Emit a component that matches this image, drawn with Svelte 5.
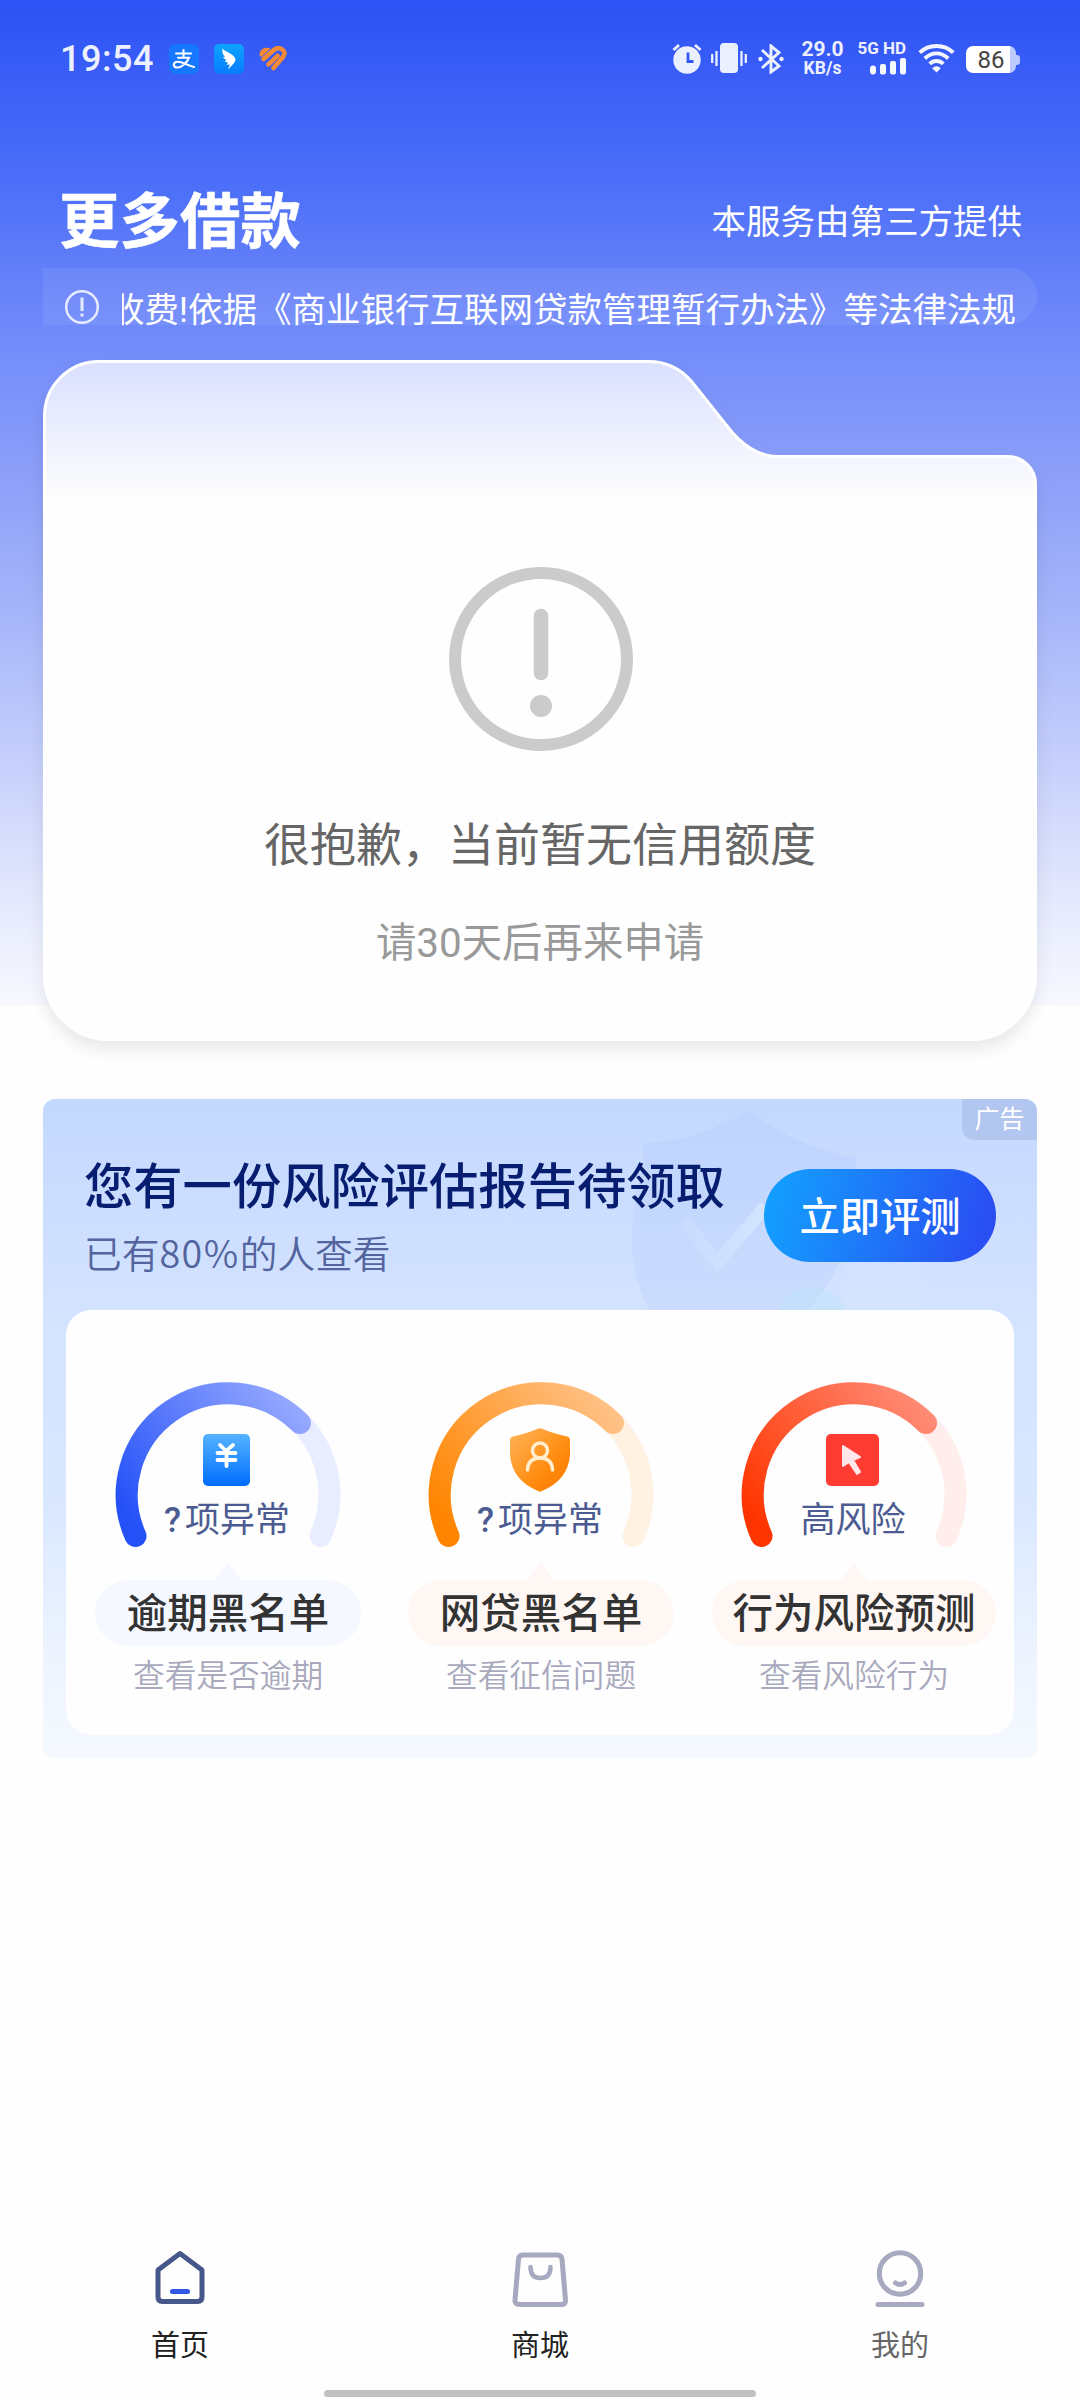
<script>
  const gauges = [
    { id: 'blue', from: '#2450f8', to: '#98abff', track: '#e8edff', pill: '#f5f8ff', pillWidth: 266, query: true, value: '项异常', title: '逾期黑名单', note: '查看是否逾期' },
    { id: 'orange', from: '#ff8500', to: '#ffc38a', track: '#fff2e3', pill: '#fff7f3', pillWidth: 266, query: true, value: '项异常', title: '网贷黑名单', note: '查看征信问题' },
    { id: 'red', from: '#ff3500', to: '#ff8d78', track: '#ffeeeb', pill: '#fff7f4', pillWidth: 284, query: false, value: '高风险', title: '行为风险预测', note: '查看风险行为' }
  ];
</script>

<div class="page">
  <header class="status">
    <div class="left">
      <span class="time">19:54</span>
      <svg class="app" viewBox="0 0 30 30">
        <rect width="30" height="30" rx="6" fill="#1677ff" />
        <g fill="none" stroke="#fff" stroke-width="2.1" stroke-linecap="round">
          <path d="M7 9.5H22M14.5 6V13.5M9 13.7H20C18.5 18 13 23.5 8.5 23.5C3 23.5 4 17.7 8.7 17.7C14 17.7 18 21.5 25 23" />
        </g>
      </svg>
      <svg class="app second" viewBox="0 0 30 30">
        <defs><linearGradient id="wing" x2="0" y2="1"><stop stop-color="#0da4ff" /><stop offset="1" stop-color="#087bff" /></linearGradient></defs>
        <rect width="30" height="30" rx="5" fill="url(#wing)" />
        <path d="M8.5 4.5C11 8 21 10 21.500 15.500C21.500 18 18 21.500 14 25.500L15.800 20.500L12.500 20.800L14 18.600L10.500 17.500L12.500 16.300L8.800 13.500L11 12.800C8.500 10.500 8 7.500 8.500 4.500Z" fill="#fff" />
      </svg>
      <svg class="heart" viewBox="0 0 28 26">
        <path d="M.5 9C.5 3 6 .3 11.500 2.500L3 10.500Q1 11.500 .5 9Z" fill="#f58a36" />
        <g fill="none" stroke="#f58a36" stroke-width="4.600" stroke-linecap="round">
          <path d="M4.600 13L14.500 4.200C20 -.5 28.500 4.500 24.300 10.500L14.500 22M9.500 18.300L18.500 9.800" />
        </g>
      </svg>
    </div>
    <div class="right">
      <svg class="alarm" viewBox="0 0 30 31">
        <circle cx="15" cy="17" r="13.700" fill="#eaf0ff" />
        <path d="M1.500 7L7 2M23 2L28.500 7" stroke="#eaf0ff" stroke-width="3" />
        <path d="M16 9.500V18.500H21.500" fill="none" stroke="#3157f5" stroke-width="2.800" />
      </svg>
      <svg class="vibrate" viewBox="0 0 36 31">
        <rect x="9" width="18" height="30" rx="4" fill="#eaf0ff" />
        <path d="M1.200 11V20M5.500 8V23M30.500 8V23M34.800 11V20" stroke="#eaf0ff" stroke-width="2.300" />
      </svg>
      <svg class="bt" viewBox="0 0 26 30">
        <path d="M4 6L21 22L13 28V2L21 8.500L4 24" fill="none" stroke="#eaf0ff" stroke-width="2.900" />
        <circle cx="2.500" cy="15" r="2.200" fill="#eaf0ff" /><circle cx="23.500" cy="15" r="2.200" fill="#eaf0ff" />
      </svg>
      <div class="speed"><span>29.0</span><span class="unit">KB/s</span></div>
      <div class="signal">
        <span>5G HD</span>
        <svg viewBox="0 0 36 17">
          <g fill="#f5f8ff"><rect y="7.500" width="6" height="9" rx="3" /><rect x="10" y="6" width="6" height="10.500" rx="2" /><rect x="20" y="3" width="6" height="13.500" rx="2" /><rect x="30" width="6" height="16.500" rx="2" /></g>
        </svg>
      </div>
      <svg class="wifi" viewBox="0 0 38 31">
        <g fill="none" stroke="#f2f5ff" stroke-width="4"><path d="M1.800 9.500C11 .300 27 .300 36.200 9.500M7 15.500C14 8.500 24 8.500 31 15.500M12 21C16 17 22 17 26 21" /></g>
        <path d="M14.500 25.500Q19 21.500 23.500 25.500L19 30Z" fill="#f2f5ff" />
      </svg>
      <div class="battery"><span>86</span></div>
    </div>
  </header>

  <div class="heading">
    <h1>更多借款</h1>
    <span>本服务由第三方提供</span>
  </div>

  <div class="notice">
    <svg viewBox="0 0 36 36"><g stroke="#e6ebff" fill="none" stroke-width="2.500"><circle cx="18" cy="18" r="15.800" /><path d="M18 8.500V22M18 24.500V27.500" stroke-width="3" /></g></svg>
    <div class="marquee"><span>收费!依据《商业银行互联网贷款管理暂行办法》等法律法规</span></div>
  </div>

  <section class="folder">
    <svg class="shape" viewBox="0 0 1080 720">
      <defs>
        <linearGradient id="paper" gradientUnits="userSpaceOnUse" x1="0" y1="22" x2="0" y2="160"><stop stop-color="#dae0ff" /><stop offset="1" stop-color="#fefefe" /></linearGradient>
        <filter id="soft" x="-5%" y="-5%" width="110%" height="110%"><feDropShadow dx="0" dy="8" stdDeviation="8" flood-color="#000" flood-opacity=".09" /></filter>
      </defs>
      <path d="M99 21.500H648Q675 21.500 692 42L727 86Q750 116.500 778 116.500H1008A27.500 27.500 0 0 1 1035.500 144V635A64.500 64.500 0 0 1 971 699.500H109A64.500 64.500 0 0 1 44.500 635V76A54.500 54.500 0 0 1 99 21.500Z" fill="url(#paper)" stroke="#fff" stroke-width="3" filter="url(#soft)" />
    </svg>
    <div class="empty">
      <svg viewBox="0 0 184 184"><circle cx="92" cy="92" r="86" fill="none" stroke="#cbcbcb" stroke-width="12" /><path d="M92 49V106" stroke="#cbcbcb" stroke-width="14.500" stroke-linecap="round" /><circle cx="92" cy="139" r="11" fill="#cbcbcb" /></svg>
      <p class="sorry">很抱歉，当前暂无信用额度</p>
      <p class="retry">请30天后再来申请</p>
    </div>
  </section>

  <section class="promo">
    <svg class="deco" viewBox="0 0 450 220">
      <defs><linearGradient id="tick" x2="1" y2="0"><stop stop-color="#cbdcff" /><stop offset="1" stop-color="#d6e8ff" /></linearGradient></defs>
      <path d="M43 44Q100 42 149 11Q190 46 256 59V90Q254 160 207 212H50Q32 180 32 140Q32 100 43 70Z" fill="#a5bffa" opacity=".19" />
      <path d="M84 122L117 164L166 107" fill="none" stroke="url(#tick)" stroke-width="13" opacity=".8" />
      <circle cx="212" cy="226" r="38" fill="#b8e6f6" opacity=".38" />
      <path d="M245 150H328L318 212H240Z" fill="#dfeaff" opacity=".18" />
    </svg>
    <span class="tag">广告</span>
    <div class="intro">
      <div><h2>您有一份风险评估报告待领取</h2><p>已有<span class="percent">80%</span>的人查看</p></div>
      <button>立即评测</button>
    </div>
    <div class="gauges">
      {#each gauges as g}
        <div class="gauge">
          <div class="dial">
            <svg class="arc" viewBox="0 0 226 166">
              <defs><linearGradient id={g.id} gradientUnits="userSpaceOnUse" x1="20" y1="145" x2="185" y2="20"><stop stop-color={g.from} /><stop offset="1" stop-color={g.to} /></linearGradient></defs>
              <path d="M20.500 154A101.500 101.500 0 1 1 205.500 154" fill="none" stroke={g.track} stroke-width="22" stroke-linecap="round" />
              <path d="M20.500 154A101.500 101.500 0 0 1 185 41" fill="none" stroke="url(#{g.id})" stroke-width="22" stroke-linecap="round" />
            </svg>
            <div class="core">
              {#if g.id === 'blue'}
                <svg viewBox="0 0 64 64"><defs><linearGradient id="note" x2="0" y2="1"><stop stop-color="#55b3ff" /><stop offset="1" stop-color="#006dff" /></linearGradient></defs><rect x="8" y="6" width="47" height="52" rx="5" fill="url(#note)" /><path d="M25 17L31 23L38 17M22.500 25H40.500M22.500 32H40.500M31.500 24V38" fill="none" stroke="#fff" stroke-width="3.800" stroke-linecap="round" /></svg>
              {:else if g.id === 'orange'}
                <svg viewBox="0 0 64 64"><defs><linearGradient id="guard" x2="1" y2="1"><stop stop-color="#ffb45a" /><stop offset=".65" stop-color="#ff8a0c" /><stop offset="1" stop-color="#f87800" /></linearGradient></defs><path d="M30 .7Q32 -.3 34 .7Q44 5 59 8.500Q62 9 62 12V27Q60 52 34 63Q32 64 30 63Q4 52 2 27V12Q2 9 5 8.500Q20 5 30 .7Z" fill="url(#guard)" /><g fill="none" stroke="#ffedce" stroke-width="3.500" stroke-linecap="round"><circle cx="32" cy="22.500" r="7.500" /><path d="M19.500 42Q20 30 32 30Q44 30 44.500 42" /></g></svg>
              {:else}
                <svg viewBox="0 0 64 64"><rect x="5" y="6" width="53" height="52" rx="5" fill="#ff3c31" /><path d="M22 18L39 29L32 32L39 44L36 46L28 34L22 38Z" fill="#ffe6e9" stroke="#ffe6e9" stroke-width="2" stroke-linejoin="round" /></svg>
              {/if}
              <div class="value">{#if g.query}<span class="query">?</span>{/if}{g.value}</div>
            </div>
          </div>
          <div class="pill" style="width: {g.pillWidth}px; --pill: {g.pill}">{g.title}</div>
          <p>{g.note}</p>
        </div>
      {/each}
    </div>
  </section>

  <nav>
    <div class="item"><svg viewBox="0 0 64 64"><path d="M32 7.500L54 24V51Q54 55.500 49.500 55.500H14.500Q10 55.500 10 51V24Z" fill="none" stroke="#465789" stroke-width="5" stroke-linejoin="round" /><path d="M24.500 45.500H39.500" stroke="#3157e5" stroke-width="5" stroke-linecap="round" /></svg><span>首页</span></div>
    <div class="item"><svg viewBox="0 0 64 64"><path d="M15 9H49Q53.500 9 54 13L57.500 54Q58 58.500 53 58.500H12Q6.500 58.500 7 54L10.500 13Q11 9 15 9Z" fill="none" stroke="#a6a9bf" stroke-width="5" /><path d="M22.500 21Q22.500 32 32.500 32Q42.500 32 42.500 21" fill="none" stroke="#a6a9bf" stroke-width="4.500" stroke-linecap="round" /></svg><span>商城</span></div>
    <div class="item mine"><svg viewBox="0 0 64 64"><circle cx="32" cy="27.500" r="20.700" fill="none" stroke="#a6a9bf" stroke-width="5" /><path d="M27.500 37Q32 40 36.500 37M10 58.500H54" fill="none" stroke="#a6a9bf" stroke-width="5" stroke-linecap="round" /></svg><span>我的</span></div>
  </nav>
  <div class="home-bar"></div>
</div>

<style>
  :global(body) { margin: 0; background: #fefefe; }
  .page { width: 1080px; height: 2400px; display: flex; flex-direction: column; overflow: hidden; font-family: Roboto, "Noto Sans CJK SC", sans-serif; background: linear-gradient(180deg, #2c52f4 0, #4466f8 130px, #4d70f9 190px, #6883f9 290px, #738dfb 350px, #8b9ef9 470px, #a9b8fa 630px, #c8d1fc 770px, #e2e7fd 890px, #f8f9ff 1005px, #fefefe 1006px); }
  .page > * { flex: none; }
  h1, h2, p { margin: 0; }
  svg { display: block; flex: none; }

  .status { height: 120px; display: flex; justify-content: space-between; box-sizing: border-box; padding: 0 64px 0 60px; color: #edf1ff; }
  .left, .right { display: flex; align-items: center; height: 117px; }
  .time { width: 109px; font-size: 36px; font-weight: 500; letter-spacing: .5px; }
  .app { width: 30px; height: 30px; }
  .second { margin-left: 15px; }
  .heart { width: 28px; height: 26px; margin-left: 15px; }
  .alarm { width: 30px; height: 31px; }
  .vibrate { width: 36px; height: 31px; margin-left: 9px; }
  .bt { width: 26px; height: 30px; margin-left: 11px; }
  .speed { width: 43px; margin-left: 17px; padding-bottom: 2px; display: flex; flex-direction: column; align-items: center; font-size: 21px; font-weight: 700; line-height: 20px; }
  .unit { font-size: 17.500px; line-height: 18px; }
  .signal { width: 49px; margin-left: 13px; padding-bottom: 2px; display: flex; flex-direction: column; align-items: flex-end; gap: 3px; font-size: 17px; font-weight: 700; line-height: 14px; white-space: nowrap; }
  .signal svg { width: 36px; height: 17px; }
  .wifi { width: 37px; height: 31px; margin-left: 12px; }
  .battery { position: relative; width: 50px; height: 27px; margin: 2px 0 0 11px; border-radius: 7px; background: linear-gradient(90deg, #fff 44px, #bccaff 44px); color: #444; font-size: 24px; line-height: 28px; text-align: center; }
  .battery::after { content: ''; position: absolute; left: 50px; top: 9px; width: 4px; height: 10px; border-radius: 0 3px 3px 0; background: #bccaff; }

  .heading { height: 148px; display: flex; align-items: center; justify-content: space-between; padding: 54px 58px 0 59px; color: #fff; box-sizing: border-box; }
  h1 { padding-top: 4px; font-size: 60.500px; font-weight: 700; line-height: 80px; -webkit-text-stroke: .5px #fff; }
  .heading span { padding-bottom: 4px; font-size: 34.500px; }
  .notice { height: 57px; margin: 0 43px; display: flex; align-items: flex-end; box-sizing: border-box; padding-left: 21px; border-radius: 0 29px 29px 0; background: rgba(255,255,255,.07); color: #fff; }
  .notice svg { width: 36px; height: 36px; }
  .marquee { width: 894px; height: 42px; margin-left: 22px; overflow-x: clip; overflow-y: visible; display: flex; justify-content: flex-end; font-size: 34.500px; line-height: 54px; white-space: nowrap; }

  .folder { position: relative; height: 720px; margin-top: 15px; }
  .shape { position: absolute; inset: 0; width: 1080px; height: 720px; }
  .empty { position: relative; display: flex; flex-direction: column; align-items: center; padding: 227px 0 0; }
  .empty svg { width: 184px; height: 184px; margin-left: 2px; }
  .sorry { margin-top: 60px; font-size: 46px; line-height: 68px; color: #666; }
  .retry { margin-top: 35px; font-size: 40.400px; line-height: 60px; color: #999; }

  .promo { position: relative; margin: 39px 43px 0; height: 659px; box-sizing: border-box; padding: 0 23px; border-radius: 12px; overflow: hidden; background: linear-gradient(180deg, #c4d8ff 0, #d5e4ff 235px, #d9e7ff 400px, #eef4ff 560px, #f5f9ff 100%); }
  .deco { position: absolute; left: 557px; top: 0; width: 450px; height: 220px; }
  .tag { position: absolute; right: 0; top: 0; width: 75px; height: 41px; border-radius: 0 12px 0 12px; background: #b2c6ef; color: #fff; font-size: 25px; line-height: 42px; text-align: center; }
  .intro { position: relative; height: 211px; display: flex; justify-content: space-between; align-items: flex-start; box-sizing: border-box; padding: 57px 18px 0; }
  h2 { font-size: 49.300px; line-height: 62px; font-weight: 500; color: #071d70; white-space: nowrap; }
  .intro p { margin-top: 7px; color: #53649e; font-family: "Noto Sans CJK SC", sans-serif; font-size: 37.700px; line-height: 54px; font-weight: 350; }
  .percent { letter-spacing: 1.500px; }
  button { border: 0; width: 232px; height: 93px; margin-top: 13px; padding: 0 0 5px; border-radius: 47px; background: linear-gradient(105deg, #12a3ff 0%, #294ff3 92%); color: #fff; font: 500 40.300px Roboto, "Noto Sans CJK SC", sans-serif; }
  .gauges { position: relative; height: 425px; box-sizing: border-box; padding-left: 2px; display: grid; grid-template-columns: repeat(3, 313px); justify-content: center; border-radius: 25px; background: #fefefe; }
  .gauge { display: flex; flex-direction: column; align-items: center; padding-top: 72px; }
  .dial { position: relative; width: 226px; height: 166px; }
  .arc { position: absolute; inset: 0; width: 226px; height: 166px; }
  .core { position: relative; height: 166px; display: flex; flex-direction: column; align-items: center; padding: 46px 2px 0 0; box-sizing: border-box; color: #4c5b91; font-size: 35px; line-height: 50px; }
  .core svg { width: 64px; height: 64px; }
  .value { margin-top: 4px; white-space: nowrap; }
  .query { margin-right: 4px; font-weight: 500; }
  .pill { position: relative; height: 66px; margin-top: 32px; border-radius: 33px; background: var(--pill); color: #333; font-size: 40.500px; font-weight: 500; line-height: 68px; text-align: center; white-space: nowrap; }
  .pill::before { content: ''; position: absolute; left: calc(50% - 14px); top: -17px; border: 14px solid transparent; border-top: 0; border-bottom: 18px solid var(--pill); }
  .gauge p { margin-top: 7px; color: #a8a9bd; font-size: 31.700px; line-height: 48px; font-weight: 350; }

  nav { display: grid; grid-template-columns: repeat(3, 1fr); margin-top: 488px; height: 136px; }
  .item { display: flex; flex-direction: column; align-items: center; color: #222; font-size: 29px; line-height: 40px; }
  .item svg { width: 64px; height: 64px; margin-bottom: 16px; }
  .mine { color: #666; }
  .home-bar { width: 432px; height: 7px; margin: auto auto 3px; border-radius: 4px; background: #c1c1c1; }
</style>
